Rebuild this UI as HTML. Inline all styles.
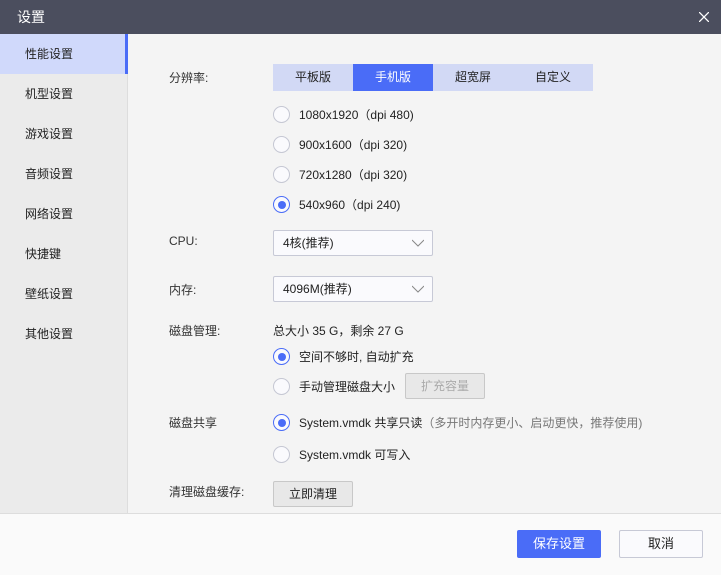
<!DOCTYPE html>
<html><head><meta charset="utf-8"><style>
*{margin:0;padding:0;box-sizing:border-box}
body{width:721px;height:575px;overflow:hidden;background:#f4f4f4;font-family:"Liberation Sans","Noto Sans CJK SC",sans-serif;font-size:12px;color:#222;position:relative}
.a{position:absolute}
.title{left:0;top:0;width:721px;height:34px;background:#4b4e5e;color:#fff;font-size:14px;line-height:34px;padding-left:17px}
.side{left:0;top:34px;width:128px;height:479px;background:#ebebeb;border-right:1px solid #ddd}
.si{position:absolute;left:0;width:128px;height:40px;line-height:40px;padding-left:25px;font-size:12px}
.sel{background:#d0d9fb}
.sel:after{content:"";position:absolute;right:0;top:0;width:3px;height:40px;background:#4a6cf7}
.lbl{color:#333}
.seg{top:64px;left:273px;height:27px;width:320px;background:#d2d9f5;display:flex}
.seg div{width:80px;text-align:center;line-height:27px}
.seg .on{background:#4a6cf7;color:#fff}
.r{width:17px;height:17px;border:1px solid #c5c7d3;border-radius:50%;background:#fafafd}
.r.on{border-color:#4a6cf7}
.r.on:after{content:"";position:absolute;left:3.5px;top:3.5px;width:8px;height:8px;border-radius:50%;background:#4a6cf7}
.dd{width:160px;height:26px;border:1px solid #c7c9d6;border-radius:2px;background:#fafafd;line-height:24px;padding-left:9px}
.dd svg{position:absolute;right:8px;top:8px}
.btn{border:1px solid #c8c8c8;background:#e8e8e8;text-align:center;border-radius:2px}
.foot{left:0;top:513px;width:721px;height:62px;background:#fafafa;border-top:1px solid #ddd}
</style></head><body>
<div class="a title">设置</div>
<svg class="a" style="left:699px;top:12px" width="10" height="10"><path d="M0 0L10 10M10 0L0 10" stroke="#fff" stroke-width="1.3"/></svg>
<div class="a side">
<div class="si sel" style="top:0">性能设置</div>
<div class="si" style="top:40px">机型设置</div>
<div class="si" style="top:80px">游戏设置</div>
<div class="si" style="top:120px">音频设置</div>
<div class="si" style="top:160px">网络设置</div>
<div class="si" style="top:200px">快捷键</div>
<div class="si" style="top:240px">壁纸设置</div>
<div class="si" style="top:280px">其他设置</div>
</div>
<div class="a lbl" style="left:169px;top:69px">分辨率:</div>
<div class="a seg"><div>平板版</div><div class="on">手机版</div><div>超宽屏</div><div>自定义</div></div>
<div class="a r" style="left:273px;top:106px"></div><div class="a" style="left:299px;top:106px">1080x1920（dpi 480)</div>
<div class="a r" style="left:273px;top:136px"></div><div class="a" style="left:299px;top:136px">900x1600（dpi 320)</div>
<div class="a r" style="left:273px;top:166px"></div><div class="a" style="left:299px;top:166px">720x1280（dpi 320)</div>
<div class="a r on" style="left:273px;top:196px"></div><div class="a" style="left:299px;top:196px">540x960（dpi 240)</div>
<div class="a lbl" style="left:169px;top:234px">CPU:</div>
<div class="a dd" style="left:273px;top:230px">4核(推荐)<svg width="12" height="8"><path d="M0 1L6 7L12 1" fill="none" stroke="#888"/></svg></div>
<div class="a lbl" style="left:169px;top:281px">内存:</div>
<div class="a dd" style="left:273px;top:276px">4096M(推荐)<svg width="12" height="8"><path d="M0 1L6 7L12 1" fill="none" stroke="#888"/></svg></div>
<div class="a lbl" style="left:169px;top:322px">磁盘管理:</div>
<div class="a" style="left:273px;top:322px">总大小 35 G，剩余 27 G</div>
<div class="a r on" style="left:273px;top:348px"></div><div class="a" style="left:299px;top:348px">空间不够时, 自动扩充</div>
<div class="a r" style="left:273px;top:378px"></div><div class="a" style="left:299px;top:378px">手动管理磁盘大小</div>
<div class="a btn" style="left:405px;top:373px;width:80px;height:26px;line-height:24px;color:#aaa">扩充容量</div>
<div class="a lbl" style="left:169px;top:414px">磁盘共享</div>
<div class="a r on" style="left:273px;top:414px"></div><div class="a" style="left:299px;top:414px">System.vmdk 共享只读<span style="color:#777">（多开时内存更小、启动更快，推荐使用)</span></div>
<div class="a r" style="left:273px;top:446px"></div><div class="a" style="left:299px;top:446px">System.vmdk 可写入</div>
<div class="a lbl" style="left:169px;top:483px">清理磁盘缓存:</div>
<div class="a btn" style="left:273px;top:481px;width:80px;height:26px;line-height:24px">立即清理</div>
<div class="a foot"></div>
<div class="a" style="left:517px;top:530px;width:84px;height:28px;background:#4a6cf7;color:#fff;border-radius:2px;text-align:center;line-height:28px;font-size:13px">保存设置</div>
<div class="a" style="left:619px;top:530px;width:84px;height:28px;background:#fafafd;border:1px solid #c7c9d6;border-radius:2px;text-align:center;line-height:26px;font-size:13px">取消</div>
</body></html>
